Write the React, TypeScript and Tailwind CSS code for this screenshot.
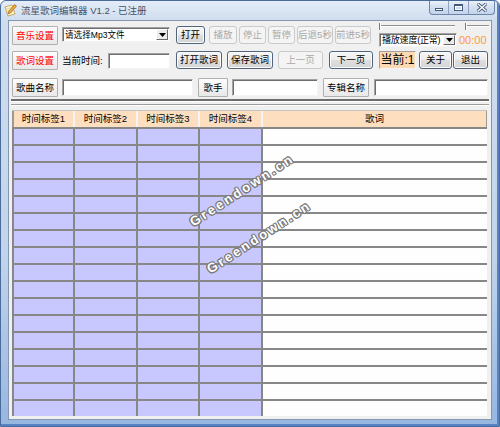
import type { ReactNode } from 'react';

type Kind = 'flat' | 'normal' | 'disabled';

function Btn({ kind = 'normal', red, className = '', children }: { kind?: Kind; red?: boolean; className?: string; children: ReactNode }) {
  const look =
    kind === 'flat'
      ? 'border border-[#b0b0b0] bg-[linear-gradient(#fdfdfd,#e8e8e8)] rounded-[1px]'
      : kind === 'disabled'
        ? 'border border-[#c8cacc] rounded-[3px] bg-[#f4f4f4] text-[#a9a9a9]'
        : 'border border-[#50647c] rounded-[3px] bg-[linear-gradient(#f7f7f7,#ececec_48%,#dedede_52%,#d5d5d5)] shadow-[inset_0_0_0_1px_#fbfbfb]';
  return (
    <div className={`flex shrink-0 items-center justify-center whitespace-nowrap leading-none text-[9.5px] ${look} ${red ? 'text-[#ff0000]' : ''} ${className}`}>
      {children}
    </div>
  );
}

function Field({ className = '' }: { className?: string }) {
  return (
    <div
      className={`shrink-0 bg-white border border-[#a3a3a3] border-b-[#f4f4f4] border-r-[#f4f4f4] shadow-[inset_1px_1px_0_#6e6e6e] ${className}`}
    />
  );
}

function Combo({ text, className = '', textClass = '' }: { text: string; className?: string; textClass?: string }) {
  return (
    <div
      className={`flex shrink-0 items-stretch bg-white border border-[#a3a3a3] border-b-[#f4f4f4] border-r-[#f4f4f4] shadow-[inset_1px_1px_0_#6e6e6e] ${className}`}
    >
      <div className={`flex-1 flex items-center pl-[2px] pt-[1px] leading-none whitespace-nowrap overflow-hidden ${textClass}`}>{text}</div>
      <div className="w-[12px] my-[1px] mr-[1px] flex items-center justify-center bg-[#ececec] border border-t-white border-l-white border-b-[#6a6a6a] border-r-[#6a6a6a]">
        <svg width="7" height="4" viewBox="0 0 7 4">
          <path d="M0 0h7L3.5 4z" fill="#000" />
        </svg>
      </div>
    </div>
  );
}

function Track({ className = '' }: { className?: string }) {
  return (
    <div className={`flex items-start shrink-0 ${className}`}>
      <div className="w-[2px] h-[7px] border-l border-[#7a7a7a] bg-white" />
      <div className="flex-1 mt-[2px] h-[2px] border-t border-[#8f8f8f] border-b border-b-white" />
    </div>
  );
}

function CaptionButtons() {
  return (
    <div className="ml-auto mr-[4px] -mt-[1px] self-start flex h-[15px] border border-t-0 border-[#6b84a8] rounded-b-[4px] overflow-hidden bg-[linear-gradient(#eef3fa,#d4e0ef_50%,#c3d3ea)]">
      <div className="w-[19px] flex items-end justify-center pb-[3px] border-r border-[#8ea3c2]">
        <div className="w-[8px] h-[3px] bg-white border border-[#445a7a]" />
      </div>
      <div className="w-[20px] flex items-center justify-center border-r border-[#8ea3c2]">
        <div className="w-[9px] h-[7px] border border-[#445a7a] border-t-2 shadow-[inset_0_0_0_1px_#fff]" />
      </div>
      <div className="w-[25px] flex items-center justify-center">
        <svg width="10" height="9" viewBox="0 0 10 9">
          <path d="M1 1l8 7M9 1l-8 7" stroke="#445a7a" strokeWidth="3.2" strokeLinecap="square" />
          <path d="M1 1l8 7M9 1l-8 7" stroke="#fff" strokeWidth="1.3" strokeLinecap="square" />
        </svg>
      </div>
    </div>
  );
}

function AppIcon() {
  return (
    <svg width="15" height="15" viewBox="0 0 15 15" className="shrink-0">
      <path d="M2 4l7-2 3 9-7 2z" fill="#fff6cf" stroke="#b59a4a" strokeWidth="0.8" />
      <path d="M3.5 6l5-1.4M4.2 8l5-1.4M4.9 10l4-1.1" stroke="#c9b36e" strokeWidth="0.6" />
      <path d="M11.5 1.5l2 1.5-6 7-2.3.8.4-2.2z" fill="#f2a93b" stroke="#9a6420" strokeWidth="0.7" />
    </svg>
  );
}

const COLS = ['时间标签1', '时间标签2', '时间标签3', '时间标签4'];
const ROWS = Array.from({ length: 17 }, (_, i) => i);

function Watermark({ className = '' }: { className?: string }) {
  return (
    <div
      className={`absolute -translate-x-1/2 -translate-y-1/2 -rotate-[33deg] whitespace-nowrap pointer-events-none font-['Liberation_Sans',sans-serif] font-bold text-[13px] leading-none tracking-[2.6px] text-white [text-shadow:1px_0_#7a7a7a,-1px_0_#7a7a7a,0_1px_#7a7a7a,0_-1px_#7a7a7a,1px_1px_#7a7a7a,-1px_-1px_#7a7a7a,1px_-1px_#7a7a7a,-1px_1px_#7a7a7a] ${className}`}
    >
      Greendown.cn
    </div>
  );
}

export default function App() {
  return (
    <div className="w-[500px] h-[427px] flex flex-col overflow-hidden rounded-t-[6px] border border-[#4a6c9c] bg-[linear-gradient(to_bottom,#e4edf8,#d0ddef_19px,#c2d4eb_60%,#97b6df)] shadow-[inset_-2px_-2px_0_#5583c4] font-['Liberation_Sans','Noto_Sans_CJK_SC',sans-serif] text-black">
      {/* title bar */}
      <div className="h-[19px] flex items-center shrink-0">
        <div className="ml-[2px]">
          <AppIcon />
        </div>
        <div className="ml-[3px] text-[9.5px] leading-none text-[#44536a] whitespace-nowrap">流星歌词编辑器 V1.2 - 已注册</div>
        <CaptionButtons />
      </div>

      {/* client */}
      <div className="relative flex-1 mx-[7px] mb-[6px] border border-[#8597b0] bg-[#f0f0f0] pt-[1px] flex flex-col">
        {/* row 1 */}
        <div className="flex items-start h-[25px] pl-[3px]">
          <Btn kind="flat" red className="w-[46px] h-[19px] mt-[4px]">音乐设置</Btn>
          <Combo text="请选择Mp3文件" className="w-[108px] h-[15px] mt-[5px] ml-[4px]" textClass="text-[8.6px]" />
          <Btn className="w-[29px] h-[18px] mt-[4px] ml-[6px]">打开</Btn>
          <Btn kind="disabled" className="w-[28px] h-[18px] mt-[4px] ml-[4px]">播放</Btn>
          <Btn kind="disabled" className="w-[27px] h-[18px] mt-[4px] ml-[2px]">停止</Btn>
          <Btn kind="disabled" className="w-[27px] h-[18px] mt-[4px] ml-[2px]">暂停</Btn>
          <Btn kind="disabled" className="w-[36px] h-[18px] mt-[4px] ml-[2px]">后退5秒</Btn>
          <Btn kind="disabled" className="w-[36px] h-[18px] mt-[4px] ml-[2px]">前进5秒</Btn>
          <div className="ml-[8px] w-[110px] flex flex-col">
            <div className="h-[10px] flex items-start pt-[1px]">
              <Track className="w-[76px]" />
              <Track className="w-[24px] ml-[10px]" />
            </div>
            <div className="mt-[1px] flex items-center">
              <Combo text="播放速度(正常)" className="w-[78px] h-[14px]" textClass="text-[9px] tracking-[-0.2px]" />
              <div className="ml-[2px] text-[11px] leading-none text-[#ff9a3c]">00:00</div>
            </div>
          </div>
        </div>

        {/* row 2 */}
        <div className="flex items-start h-[19px] mt-[4px] pl-[3px]">
          <Btn kind="flat" red className="w-[46px] h-[19px]">歌词设置</Btn>
          <div className="ml-[4px] w-[46px] h-[19px] flex items-center text-[9.5px] leading-none whitespace-nowrap">当前时间:</div>
          <Field className="w-[62px] h-[16px] mt-[2px]" />
          <Btn className="w-[46px] h-[18px] ml-[6px]">打开歌词</Btn>
          <Btn className="w-[46px] h-[18px] ml-[5px]">保存歌词</Btn>
          <Btn kind="disabled" className="w-[45px] h-[18px] ml-[5px]">上一页</Btn>
          <Btn className="w-[44px] h-[18px] ml-[6px]">下一页</Btn>
          <div className="ml-[6px] w-[37px] h-[18px] shrink-0 flex items-center justify-center whitespace-nowrap bg-[#fdd9b3] border border-[#a0a0a0] border-b-[#f4f4f4] border-r-[#f4f4f4] text-[12px] leading-none">
            当前:1
          </div>
          <Btn className="w-[33px] h-[18px] ml-[3px]">关于</Btn>
          <Btn className="w-[35px] h-[18px] ml-[1px]">退出</Btn>
        </div>

        {/* row 3 */}
        <div className="flex items-start h-[19px] mt-[8px] pl-[3px]">
          <Btn kind="flat" className="w-[46px] h-[19px]">歌曲名称</Btn>
          <Field className="w-[131px] h-[17px] ml-[4px] mt-[1px]" />
          <Btn kind="flat" className="w-[30px] h-[19px] ml-[5px]">歌手</Btn>
          <Field className="w-[86px] h-[17px] ml-[4px] mt-[1px]" />
          <Btn kind="flat" className="w-[46px] h-[19px] ml-[5px]">专辑名称</Btn>
          <Field className="w-[114px] h-[17px] ml-[5px] mt-[1px]" />
        </div>

        {/* separator */}
        <div className="mx-[2px] mt-[2px]">
          <div className="h-[2px] bg-[#6d6d6d]" />
          <div className="h-[1px] bg-white" />
          <div className="h-[1px] mt-[2px] bg-[#9c9c9c]" />
          <div className="h-[1px] bg-white" />
        </div>

        {/* grid */}
        <div className="ml-[3px] mt-[4px] w-[475px] flex flex-col">
          <div className="flex h-[17px] border-t border-[#c4c4c4] bg-[#fddfc0]">
            {COLS.map((c, i) => (
              <div
                key={c}
                className={`${i === 0 ? 'w-[61px] border-l-2 border-l-[#9a9a9a]' : i === 2 ? 'w-[62px] border-l-2 border-l-[#f4f4f4]' : 'w-[63px] border-l-2 border-l-[#f4f4f4]'} flex items-center justify-center text-[9.5px] leading-none`}
              >
                {c}
              </div>
            ))}
            <div className="flex-1 border-l-2 border-l-[#f4f4f4] border-r border-r-[#9a9a9a] flex items-center justify-center text-[9.5px] leading-none">
              歌词
            </div>
          </div>
          {ROWS.map((r) => (
            <div key={r} className="flex h-[17px]">
              <div className="w-[61px] bg-[#c8c8fe] border-t-2 border-l-2 border-[#878787]" />
              <div className="w-[63px] bg-[#c8c8fe] border-t-2 border-l-2 border-[#878787]" />
              <div className="w-[62px] bg-[#c8c8fe] border-t-2 border-l-2 border-[#878787]" />
              <div className="w-[63px] bg-[#c8c8fe] border-t-2 border-l-2 border-[#878787]" />
              <div className="flex-1 bg-[#fefefe] border-t-2 border-l-2 border-[#878787]" />
            </div>
          ))}
        </div>

        <Watermark className="left-[233px] top-[169px]" />
        <Watermark className="left-[250px] top-[216px]" />
      </div>
    </div>
  );
}
